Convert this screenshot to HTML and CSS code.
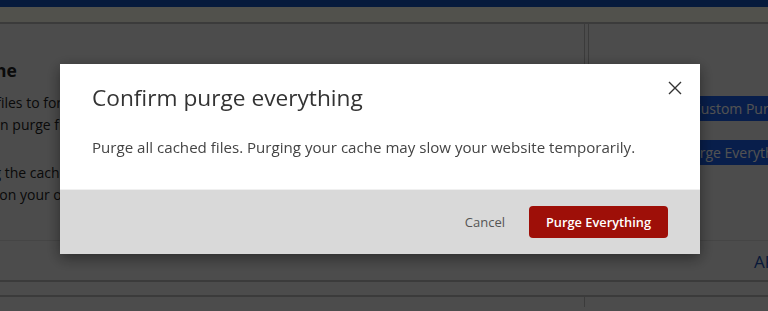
FILE: index.html
```html
<!DOCTYPE html>
<html lang="en">

<head>
    <meta charset="UTF-8">
    <meta name="viewport" content="width=device-width, initial-scale=1.0">
    <title>Caching</title>
    <link rel="stylesheet" href="styles.css">
</head>

<body>
    <div class="topbar"></div>
    <div class="subbar"></div>

    <div class="card">
        <div class="card-main">
            <h3>Purge Cache</h3>
            <p>
                <span>Clear cached files to force Cloudflare to fetch a fresh version of those files from your web</span>
                <span>server. You can purge files selectively or all at once.</span>
            </p>
            <p>
                <span><strong>Note:</strong> Purging the cache may temporarily degrade performance for your website and</span>
                <span>increase load on your origin.</span>
            </p>
        </div>
        <div class="card-side">
            <button class="btn-blue">Custom Purge</button>
            <button class="btn-blue">Purge Everything</button>
        </div>
    </div>

    <div class="card-foot">
        <a href="#">API</a>
    </div>
    <div class="gap-row"></div>
    <div class="card next">
        <div class="card-main"></div>
        <div class="card-side"></div>
    </div>

    <!-- Modal de confirmação -->
    <div class="overlay">
        <div class="modal">
            <div class="modal-body">
                <h2>Confirm purge everything</h2>
                <p>Purge all cached files. Purging your cache may slow your website temporarily.</p>
                <button class="close" aria-label="Close">
                    <svg width="14" height="14" viewBox="0 0 14 14">
                        <path d="M1 1 L13 13 M13 1 L1 13" stroke="#333" stroke-width="1.4" fill="none" />
                    </svg>
                </button>
            </div>
            <div class="modal-footer">
                <button class="btn-cancel">Cancel</button>
                <button class="btn-danger">Purge Everything</button>
            </div>
        </div>
    </div>
</body>

</html>
```

FILE: styles.css
```css
* {
    box-sizing: border-box;
}

body {
    font-family: "Open Sans", Arial, sans-serif;
    margin: 0;
    padding: 0;
    background-color: #ececec;
    overflow: hidden;
    height: 311px;
}

.topbar {
    height: 7px;
    background-color: #1351bc;
}

.subbar {
    height: 17px;
    background-color: #fafaeb;
    border-bottom: 2px solid #b8b8b8;
}

.card {
    display: flex;
    height: 217px;
    border-bottom: 1px solid #d6d6d6;
}

.card-main {
    flex: none;
    width: 676px;
    padding: 34px 0 0 0;
    margin-left: -91px;
    border-right: 1px solid #b8b8b8;
    color: #222;
    overflow: hidden;
    white-space: nowrap;
}

.card-main h3 {
    font-size: 17.5px;
    line-height: 24px;
    margin: 0 0 10px 0;
}

.card-main p {
    font-size: 14px;
    line-height: 22px;
    margin: 0 0 26px 0;
}

.card-main p span {
    display: block;
}

.card-side {
    flex: 1;
    border-left: 1px solid #b8b8b8;
    margin-left: 3px;
    padding: 72px 0 0 91px;
    display: flex;
    flex-direction: column;
    align-items: flex-start;
    gap: 19px;
    white-space: nowrap;
    overflow: hidden;
}

.btn-blue {
    flex: none;
    width: 116px;
    height: 25px;
    padding: 0;
    text-align: center;
    background-color: #195ee8;
    color: #fff;
    border: none;
    font-family: inherit;
    font-size: 14px;
}

.card-foot {
    height: 41px;
    border-bottom: 2px solid #b8b8b8;
    padding: 9px 0 0 754px;
    white-space: nowrap;
    overflow: hidden;
}

.card-foot a {
    color: #1a4fb0;
    text-decoration: none;
    font-size: 17px;
}

.gap-row {
    height: 15px;
    border-bottom: 2px solid #b8b8b8;
}

.card.next {
    height: 10px;
    border: none;
}

.card.next .card-main {
    margin-left: 0;
    width: 585px;
    padding: 0;
}

.card.next .card-side {
    margin-left: 0;
    border-left: none;
    padding: 0;
}

.overlay {
    position: fixed;
    inset: 0;
    background-color: rgba(0, 0, 0, 0.68);
}

.modal {
    position: absolute;
    left: 60px;
    top: 64px;
    width: 640px;
    background-color: #fff;
    box-shadow: 0 4px 14px rgba(0, 0, 0, 0.45);
}

.modal-body {
    position: relative;
    height: 126px;
    padding: 18px 32px 0 32px;
    border-bottom: 1px solid #f0f0f0;
}

.modal-body h2 {
    font-size: 22.7px;
    font-weight: normal;
    color: #333;
    margin: 0 0 24px 0;
}

.modal-body p {
    font-size: 15.1px;
    color: #444;
    margin: 0;
}

.close {
    position: absolute;
    top: 17px;
    right: 18px;
    width: 14px;
    height: 14px;
    padding: 0;
    border: none;
    background: none;
    cursor: pointer;
}

.modal-footer {
    height: 64px;
    background-color: #d9d9d9;
    display: flex;
    justify-content: flex-end;
    align-items: center;
    gap: 24px;
    padding-right: 32px;
}

.btn-cancel {
    background: none;
    border: none;
    padding: 0;
    color: #555;
    font-family: inherit;
    font-size: 13px;
    cursor: pointer;
}

.btn-danger {
    height: 32px;
    padding: 0 17px;
    background-color: #9e0f08;
    color: #fff;
    border: none;
    border-radius: 4px;
    font-family: inherit;
    font-size: 12.8px;
    font-weight: 600;
    cursor: pointer;
}
```
